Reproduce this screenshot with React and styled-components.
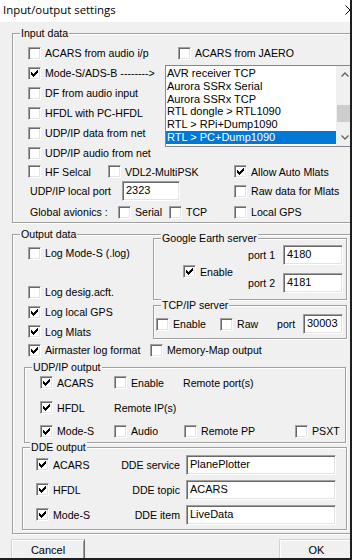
import React from "react";
import styled, { createGlobalStyle } from "styled-components";

const GlobalStyle = createGlobalStyle`
  html, body {
    margin: 0;
    padding: 0;
    background: #f0f0f0;
  }
  body {
    width: 352px;
    height: 560px;
    overflow: hidden;
  }
`;

const Window = styled.div`
  width: 352px;
  height: 560px;
  box-sizing: border-box;
  border-right: 2px solid #1e1e1e;
  border-bottom: 2px solid #1e1e1e;
  background: #f0f0f0;
  overflow: hidden;
  display: flex;
  flex-direction: column;
  font-family: "Liberation Sans", Arial, sans-serif;
  font-size: 10.6px;
  color: #000;
`;

const TitleBar = styled.div`
  height: 22px;
  flex: none;
  box-sizing: border-box;
  background: #fff;
  display: flex;
  align-items: center;
  padding: 0 0 3px 3px;
  font-family: "Open Sans", "Noto Sans", sans-serif;
  font-size: 11.4px;
  overflow: hidden;
`;

const CloseIcon = styled.svg`
  flex: none;
  margin-left: auto;
  margin-right: -5px;
`;

// etched group box, label sits over the top line
const Group = styled.div`
  position: relative;
  flex: none;
  box-sizing: border-box;
  border: 1px solid #a0a0a0;
  box-shadow: inset 1px 1px 0 #fff, 1px 1px 0 #fff;
  width: ${(p) => p.$w}px;
  height: ${(p) => p.$h}px;
  margin: ${(p) => p.$m || 0};
  padding: ${(p) => p.$pad || 0};
  display: flex;
  flex-direction: column;
`;

const Legend = styled.span`
  position: absolute;
  top: -7px;
  left: 7px;
  padding: 0 1px;
  line-height: 13px;
  background: #f0f0f0;
  white-space: nowrap;
`;

const Row = styled.div`
  display: flex;
  align-items: center;
  flex: none;
  height: ${(p) => p.$h}px;
  padding-left: ${(p) => p.$pl || 0}px;
  margin-top: ${(p) => p.$mt || 0}px;
  white-space: nowrap;
`;

const Column = styled.div`
  display: flex;
  flex-direction: column;
  flex: none;
  box-sizing: border-box;
  width: ${(p) => (p.$w ? `${p.$w}px` : "auto")};
  padding-left: ${(p) => p.$pl || 0}px;
  padding-top: ${(p) => p.$pt || 0}px;
`;

const Split = styled.div`
  display: flex;
  flex: none;
  align-items: flex-start;
`;

const Cell = styled.div`
  display: flex;
  align-items: center;
  flex: none;
  box-sizing: border-box;
  gap: 4px;
  width: ${(p) => (p.$w ? `${p.$w}px` : "auto")};
  padding-left: ${(p) => p.$pl || 0}px;
  padding-right: ${(p) => p.$pr || 0}px;
  justify-content: ${(p) => (p.$right ? "flex-end" : "flex-start")};
  white-space: nowrap;
`;

const Box = styled.span`
  width: 13px;
  height: 13px;
  flex: none;
  box-sizing: border-box;
  background: #fff;
  border: 1px solid;
  border-color: #a0a0a0 #fff #fff #a0a0a0;
  box-shadow: inset 1px 1px 0 #696969, inset -1px -1px 0 #e3e3e3;
  display: flex;
  align-items: center;
  justify-content: center;
`;

const Edit = styled.div`
  width: ${(p) => p.$w}px;
  height: 20px;
  flex: none;
  box-sizing: border-box;
  background: #fff;
  border: 1px solid;
  border-color: #a0a0a0 #fff #fff #a0a0a0;
  box-shadow: inset 1px 1px 0 #696969, inset -1px -1px 0 #e3e3e3;
  padding: 2px 0 0 3px;
  line-height: 13px;
  font-size: 11px;
  white-space: nowrap;
  overflow: hidden;
`;

const ListBox = styled.div`
  margin-top: 2px;
  width: 189px;
  height: 82px;
  box-sizing: border-box;
  border: 1px solid #828790;
  background: #fff;
  display: flex;
  overflow: hidden;
`;

const ListItems = styled.div`
  width: 170px;
  flex: none;
  padding-top: 1px;
  overflow: hidden;
  font-size: 11px;
`;

const ListItem = styled.div`
  height: 12.8px;
  line-height: 12.8px;
  padding-left: 1px;
  white-space: nowrap;
  background: ${(p) => (p.$selected ? "#0078d7" : "transparent")};
  color: ${(p) => (p.$selected ? "#fff" : "#000")};
`;

const ScrollBar = styled.div`
  width: 17px;
  flex: none;
  background: #f0f0f0;
  display: flex;
  flex-direction: column;
  align-items: center;
`;

const ScrollArrow = styled.div`
  height: 17px;
  width: 17px;
  flex: none;
  display: flex;
  align-items: center;
  justify-content: center;
  margin-top: ${(p) => (p.$bottom ? "auto" : "0")};
`;

const Thumb = styled.div`
  width: 15px;
  height: 17px;
  flex: none;
  margin-top: 22px;
  background: #cdcdcd;
`;

const PortGrid = styled.div`
  display: grid;
  grid-template-columns: 86px 27px 60px;
  grid-template-rows: 20px 20px;
  column-gap: 8px;
  row-gap: 8px;
  padding-top: 6px;
  align-items: center;
`;

const EnableCell = styled(Cell)`
  grid-row: 1 / span 2;
  padding-left: 29px;
  padding-top: 5px;
`;

const PortLabel = styled.span`
  text-align: right;
  white-space: nowrap;
`;

const ButtonRow = styled.div`
  display: flex;
  flex: none;
  margin-top: 5px;
`;

const Button = styled.div`
  width: ${(p) => p.$w}px;
  height: 22px;
  flex: none;
  box-sizing: border-box;
  border: 1px solid;
  border-color: #d2d2d2 #696969 #696969 #d2d2d2;
  box-shadow: inset 1px 1px 0 #fff, inset -1px -1px 0 #a0a0a0;
  background: #f0f0f0;
  display: flex;
  align-items: center;
  justify-content: center;
  font-size: 11px;
  margin-left: ${(p) => p.$ml};
  margin-right: ${(p) => p.$mr || "0"};
`;

const CHECK_ROWS = [2, 3, 4, 3, 2, 1, 0];

function CheckMark() {
  return (
    <svg width="7" height="7" viewBox="0 0 7 7" shapeRendering="crispEdges">
      {CHECK_ROWS.map((y, x) => (
        <rect key={x} x={x} y={y} width="1" height="3" fill="#000" />
      ))}
    </svg>
  );
}

function Check({ label, checked, w }) {
  return (
    <Cell $w={w}>
      <Box>{checked && <CheckMark />}</Box>
      <span>{label}</span>
    </Cell>
  );
}

function Chevron({ down }) {
  return (
    <svg width="8" height="5" viewBox="0 0 8 5">
      <path
        d={down ? "M0.5 0.5 L4 4 L7.5 0.5" : "M0.5 4.5 L4 1 L7.5 4.5"}
        fill="none"
        stroke="#606060"
        strokeWidth="1.3"
      />
    </svg>
  );
}

const receivers = [
  "AVR receiver TCP",
  "Aurora SSRx Serial",
  "Aurora SSRx TCP",
  "RTL dongle > RTL1090",
  "RTL > RPi+Dump1090",
  "RTL > PC+Dump1090",
  "Airspy receiver TCP",
];

export default function App() {
  return (
    <Window>
      <GlobalStyle />
      <TitleBar>
        <span>Input/output settings</span>
        <CloseIcon width="10" height="10" viewBox="0 0 10 10">
          <path d="M0.5 0.5 L9.5 9.5 M9.5 0.5 L0.5 9.5" stroke="#000" strokeWidth="1" />
        </CloseIcon>
      </TitleBar>

      <Group $w={360} $h={190} $m="11px 0 0 12px">
        <Legend>Input data</Legend>
        <Split>
          <Column $w={152} $pl={15} $pt={9}>
            <Row $h={20}><Check label="ACARS from audio i/p" /></Row>
            <Row $h={20}><Check label="Mode-S/ADS-B -------->" checked /></Row>
            <Row $h={20}><Check label="DF from audio input" /></Row>
            <Row $h={20}><Check label="HFDL with PC-HFDL" /></Row>
            <Row $h={20}><Check label="UDP/IP data from net" /></Row>
            <Row $h={20}><Check label="UDP/IP audio from net" /></Row>
          </Column>
          <Column $pt={9}>
            <Row $h={20} $pl={13}><Check label="ACARS from JAERO" /></Row>
            <ListBox>
              <ListItems>
                {receivers.map((r) => (
                  <ListItem key={r} $selected={r === "RTL > PC+Dump1090"}>{r}</ListItem>
                ))}
              </ListItems>
              <ScrollBar>
                <ScrollArrow><Chevron /></ScrollArrow>
                <Thumb />
                <ScrollArrow $bottom><Chevron down /></ScrollArrow>
              </ScrollBar>
            </ListBox>
          </Column>
        </Split>
        <Row $h={17} $pl={15}>
          <Check label="HF Selcal" w={80} />
          <Check label="VDL2-MultiPSK" w={126} />
          <Check label="Allow Auto Mlats" checked />
        </Row>
        <Row $h={22} $pl={15}>
          <Cell $w={94} $pl={2}>UDP/IP local port</Cell>
          <Edit $w={58}>2323</Edit>
          <Cell $w={54} />
          <Check label="Raw data for Mlats" />
        </Row>
        <Row $h={20} $pl={15}>
          <Cell $w={90} $pl={2}>Global avionics :</Cell>
          <Check label="Serial" w={51} />
          <Check label="TCP" w={65} />
          <Check label="Local GPS" />
        </Row>
      </Group>

      <Group $w={360} $h={300} $m="11px 0 0 12px">
        <Legend>Output data</Legend>
        <Split>
          <Column $w={140} $pl={15}>
            <Row $h={20} $mt={8}><Check label="Log Mode-S (.log)" /></Row>
            <Row $h={20} $mt={19}><Check label="Log desig.acft." /></Row>
            <Row $h={20}><Check label="Log local GPS" checked /></Row>
            <Row $h={19}><Check label="Log Mlats" checked /></Row>
          </Column>
          <Column>
            <Group $w={194} $h={62} $m="3px 0 0 0">
              <Legend>Google Earth server</Legend>
              <PortGrid>
                <EnableCell>
                  <Box><CheckMark /></Box>
                  <span>Enable</span>
                </EnableCell>
                <PortLabel>port 1</PortLabel>
                <Edit $w={60}>4180</Edit>
                <PortLabel>port 2</PortLabel>
                <Edit $w={60}>4181</Edit>
              </PortGrid>
            </Group>
            <Group $w={194} $h={34} $m="5px 0 0 0" $pad="8px 0 0 2px">
              <Legend>TCP/IP server</Legend>
              <Row $h={20}>
                <Check label="Enable" w={64} />
                <Check label="Raw" w={57} />
                <Cell $w={26}>port</Cell>
                <Edit $w={40}>30003</Edit>
              </Row>
            </Group>
          </Column>
        </Split>
        <Row $h={18} $pl={15}>
          <Check label="Airmaster log format" checked w={122} />
          <Check label="Memory-Map output" />
        </Row>

        <Group $w={322} $h={76} $m="8px 0 0 11px" $pad="2px 0 0 15px">
          <Legend>UDP/IP output</Legend>
          <Row $h={25}>
            <Check label="ACARS" checked w={74} />
            <Check label="Enable" w={69} />
            <Cell>Remote port(s)</Cell>
          </Row>
          <Row $h={25}>
            <Check label="HFDL" checked w={74} />
            <Cell>Remote IP(s)</Cell>
          </Row>
          <Row $h={22}>
            <Check label="Mode-S" checked w={74} />
            <Check label="Audio" w={70} />
            <Check label="Remote PP" w={111} />
            <Check label="PSXT" />
          </Row>
        </Group>

        <Group $w={325} $h={83} $m="4px 0 0 9px" $pad="4px 0 0 13px">
          <Legend>DDE output</Legend>
          <Row $h={25}>
            <Check label="ACARS" checked w={80} />
            <Cell $w={70} $right $pr={6}>DDE service</Cell>
            <Edit $w={150}>PlanePlotter</Edit>
          </Row>
          <Row $h={25}>
            <Check label="HFDL" checked w={80} />
            <Cell $w={70} $right $pr={6}>DDE topic</Cell>
            <Edit $w={150}>ACARS</Edit>
          </Row>
          <Row $h={25}>
            <Check label="Mode-S" checked w={80} />
            <Cell $w={70} $right $pr={6}>DDE item</Cell>
            <Edit $w={150}>LiveData</Edit>
          </Row>
        </Group>
      </Group>

      <ButtonRow>
        <Button $w={74} $ml="11px">Cancel</Button>
        <Button $w={75} $ml="auto" $mr="-4px">OK</Button>
      </ButtonRow>
    </Window>
  );
}
